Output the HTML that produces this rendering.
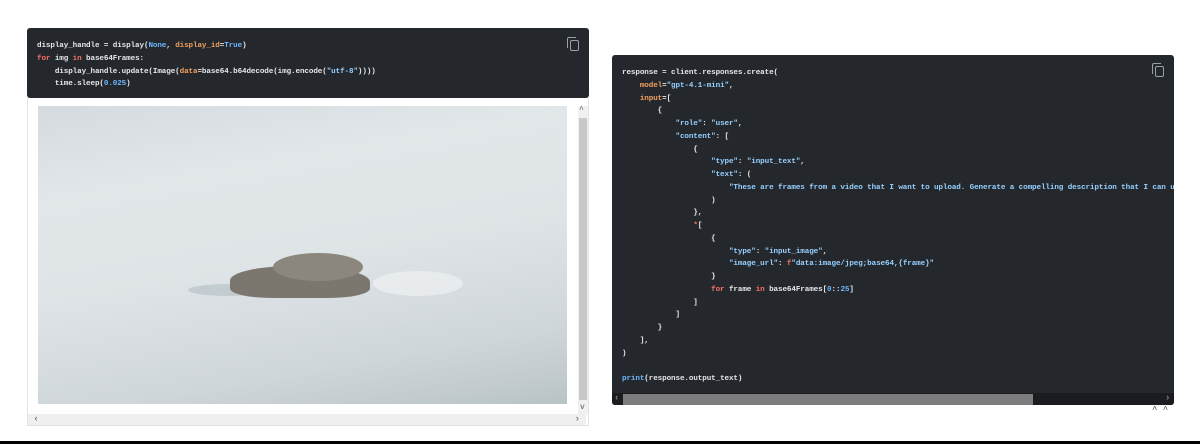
<!DOCTYPE html>
<html><head><style>
*{margin:0;padding:0;box-sizing:border-box}
body{width:1200px;height:444px;background:#fff;position:relative;overflow:hidden;font-family:"Liberation Mono",monospace}
.code{position:absolute;background:#24272c;border-radius:3px;color:#e6e6e6;font-size:7.6px;line-height:12.75px;white-space:pre;font-weight:bold;letter-spacing:-0.1px}
.k{color:#f47067}.a{color:#f0a060}.n{color:#6cb6ff}.s{color:#96d0ff}
.copy{position:absolute;width:9px;height:11px;border:1.2px solid #9aa0a6;border-radius:2px}
.copy:before{content:"";position:absolute;left:-4px;top:-4px;width:8px;height:10px;border-left:1.2px solid #9aa0a6;border-top:1.2px solid #9aa0a6;border-radius:2px 0 0 0}
</style></head><body>
<div class="code" style="left:27px;top:28px;width:562px;height:70px;padding:12px 0 0 10px">display_handle = display(<span class="n">None</span>, <span class="a">display_id</span>=<span class="n">True</span>)
<span class="k">for</span> img <span class="k">in</span> base64Frames:
    display_handle.update(Image(<span class="a">data</span>=base64.b64decode(img.encode(<span class="s">"utf-8"</span>))))
    time.sleep(<span class="n">0.025</span>)<div class="copy" style="left:543px;top:12px"></div></div>
<div style="position:absolute;left:27px;top:98px;width:562px;height:328px;border:1px solid #e3e3e3;border-top:none;background:#fff"></div>
<div style="position:absolute;left:38px;top:106px;width:529px;height:298px;background:linear-gradient(170deg,#d4dade 0%,#e2e7ea 25%,#dfe4e7 50%,#cfd6d9 80%,#b9c3c6 100%);overflow:hidden">
<div style="position:absolute;left:150px;top:178px;width:80px;height:12px;border-radius:50%;background:#c3ccd0"></div>
<div style="position:absolute;left:192px;top:160px;width:140px;height:32px;border-radius:45% 50% 30% 30%;background:#7b776e"></div>
<div style="position:absolute;left:235px;top:147px;width:90px;height:28px;border-radius:50%;background:#8c877d"></div>
<div style="position:absolute;left:335px;top:165px;width:90px;height:25px;border-radius:50%;background:#eef1f2;opacity:.7"></div>
</div>
<div style="position:absolute;left:578px;top:106px;width:10px;height:309px;background:#f0f0f0"></div>
<div style="position:absolute;left:579px;top:118px;width:8px;height:282px;background:#c8c8c8"></div>
<div style="position:absolute;left:579px;top:106px;font-size:8px;color:#555">^</div>
<div style="position:absolute;left:580px;top:403px;font-size:8px;color:#555">v</div>
<div style="position:absolute;left:28px;top:414px;width:558px;height:11px;background:#efefef;font-size:9px;color:#555;line-height:11px">&nbsp;‹<span style="position:absolute;right:6px">›</span></div>

<div class="code" style="left:612px;top:55px;width:562px;height:350px;padding:12px 0 0 10px;overflow:hidden">response = client.responses.create(
    <span class="a">model</span>=<span class="s">"gpt-4.1-mini"</span>,
    <span class="a">input</span>=[
        {
            <span class="s">"role"</span>: <span class="s">"user"</span>,
            <span class="s">"content"</span>: [
                {
                    <span class="s">"type"</span>: <span class="s">"input_text"</span>,
                    <span class="s">"text"</span>: (
                        <span class="s">"These are frames from a video that I want to upload. Generate a compelling description that I can upload along with the video."</span>
                    )
                },
                <span class="k">*</span>[
                    {
                        <span class="s">"type"</span>: <span class="s">"input_image"</span>,
                        <span class="s">"image_url"</span>: <span class="k">f</span><span class="s">"data:image/jpeg;base64,{frame}"</span>
                    }
                    <span class="k">for</span> frame <span class="k">in</span> base64Frames[<span class="n">0</span>::<span class="n">25</span>]
                ]
            ]
        }
    ],
)

<span class="n">print</span>(response.output_text)<div class="copy" style="left:543px;top:11px"></div>
<div style="position:absolute;left:0;top:338px;width:562px;height:12px;background:#1a1c1f"></div>
<div style="position:absolute;left:11px;top:339px;width:410px;height:11px;background:#7d7d7f"></div>
<div style="position:absolute;left:2px;top:337px;color:#888;font-size:9px">‹</div>
<div style="position:absolute;left:553px;top:337px;color:#888;font-size:9px">›</div>
</div>
<div style="position:absolute;left:1152px;top:405px;font-size:9px;color:#444">^ ^</div>
<div style="position:absolute;left:0;top:441px;width:1200px;height:3px;background:#000"></div>
</body></html>
